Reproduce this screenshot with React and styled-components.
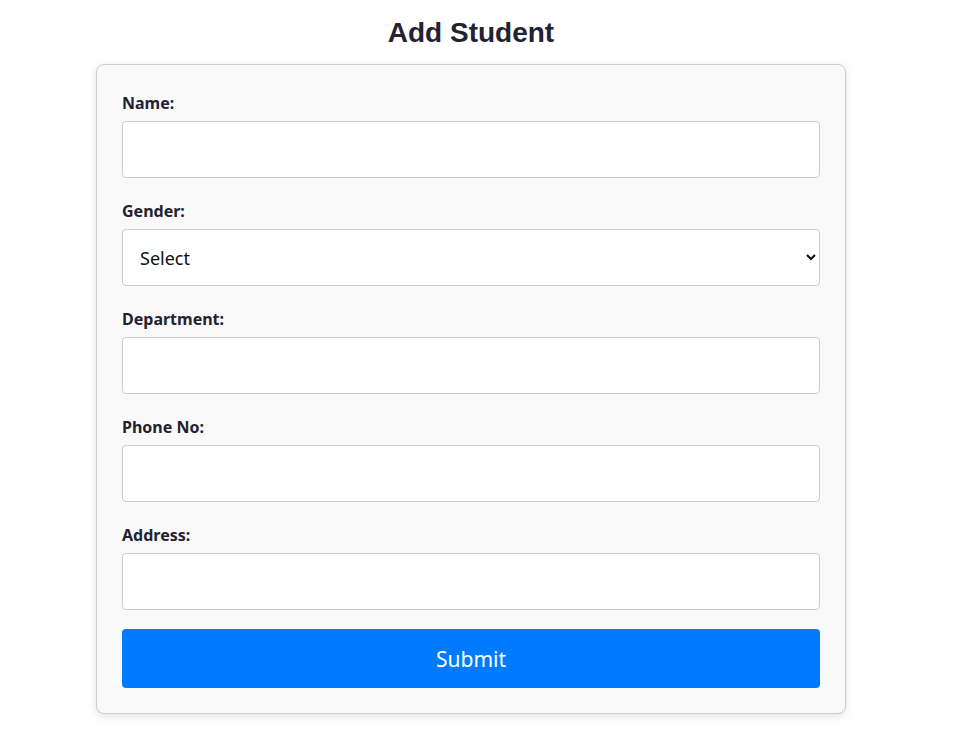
import React from 'react';
import styled, { createGlobalStyle } from 'styled-components';

const GlobalStyle = createGlobalStyle`
  html, body {
    margin: 0;
    padding: 0;
    background: #fff;
  }
  body {
    font-family: "Noto Sans", "Open Sans", sans-serif;
    color: #222;
  }
  * { box-sizing: border-box; }
`;

const Page = styled.div`
  width: 942px;
  padding-top: 16px;
  padding-bottom: 40px;
`;

const Title = styled.h2`
  margin: 0 0 14px;
  text-align: center;
  font-family: "Liberation Sans", Arial, sans-serif;
  font-size: 28px;
  line-height: 34px;
  font-weight: 700;
  color: #222230;
`;

const Card = styled.form`
  width: 750px;
  margin: 0 auto;
  padding: 25px;
  background: #f9f9f9;
  border: 1px solid #ccc;
  border-radius: 8px;
  box-shadow: 0 2px 8px rgba(0, 0, 0, 0.12);
  display: flex;
  flex-direction: column;
`;

const Field = styled.div`
  display: flex;
  flex-direction: column;
  margin-bottom: ${(p) => (p.$last ? '19px' : '20px')};
`;

const Label = styled.label`
  font-size: 16px;
  line-height: 26px;
  font-weight: 700;
  color: #222230;
  margin-bottom: 5px;
`;

const Input = styled.input`
  height: 57px;
  width: 100%;
  padding: 0 17px;
  border: 1px solid #ccc;
  border-radius: 4px;
  background: #fff;
  font-family: inherit;
  font-size: 17px;
  outline: none;
`;

const Select = styled.select`
  height: 57px;
  width: 100%;
  padding: 0 13px;
  border: 1px solid #ccc;
  border-radius: 4px;
  background: #fff;
  font-family: inherit;
  font-size: 18px;
  color: #111;
  outline: none;
`;

const Submit = styled.button`
  height: 59px;
  width: 100%;
  border: none;
  border-radius: 4px;
  background: #007bff;
  color: #fff;
  font-family: inherit;
  font-size: 21px;
  cursor: pointer;
`;

function App() {
  return (
    <Page>
      <GlobalStyle />
      <Title>Add Student</Title>
      <Card onSubmit={(e) => e.preventDefault()}>
        <Field>
          <Label>Name:</Label>
          <Input type="text" />
        </Field>
        <Field>
          <Label>Gender:</Label>
          <Select defaultValue="">
            <option value="">Select</option>
            <option value="male">Male</option>
            <option value="female">Female</option>
          </Select>
        </Field>
        <Field>
          <Label>Department:</Label>
          <Input type="text" />
        </Field>
        <Field>
          <Label>Phone No:</Label>
          <Input type="text" />
        </Field>
        <Field $last>
          <Label>Address:</Label>
          <Input type="text" />
        </Field>
        <Submit type="submit">Submit</Submit>
      </Card>
    </Page>
  );
}

export default App;
